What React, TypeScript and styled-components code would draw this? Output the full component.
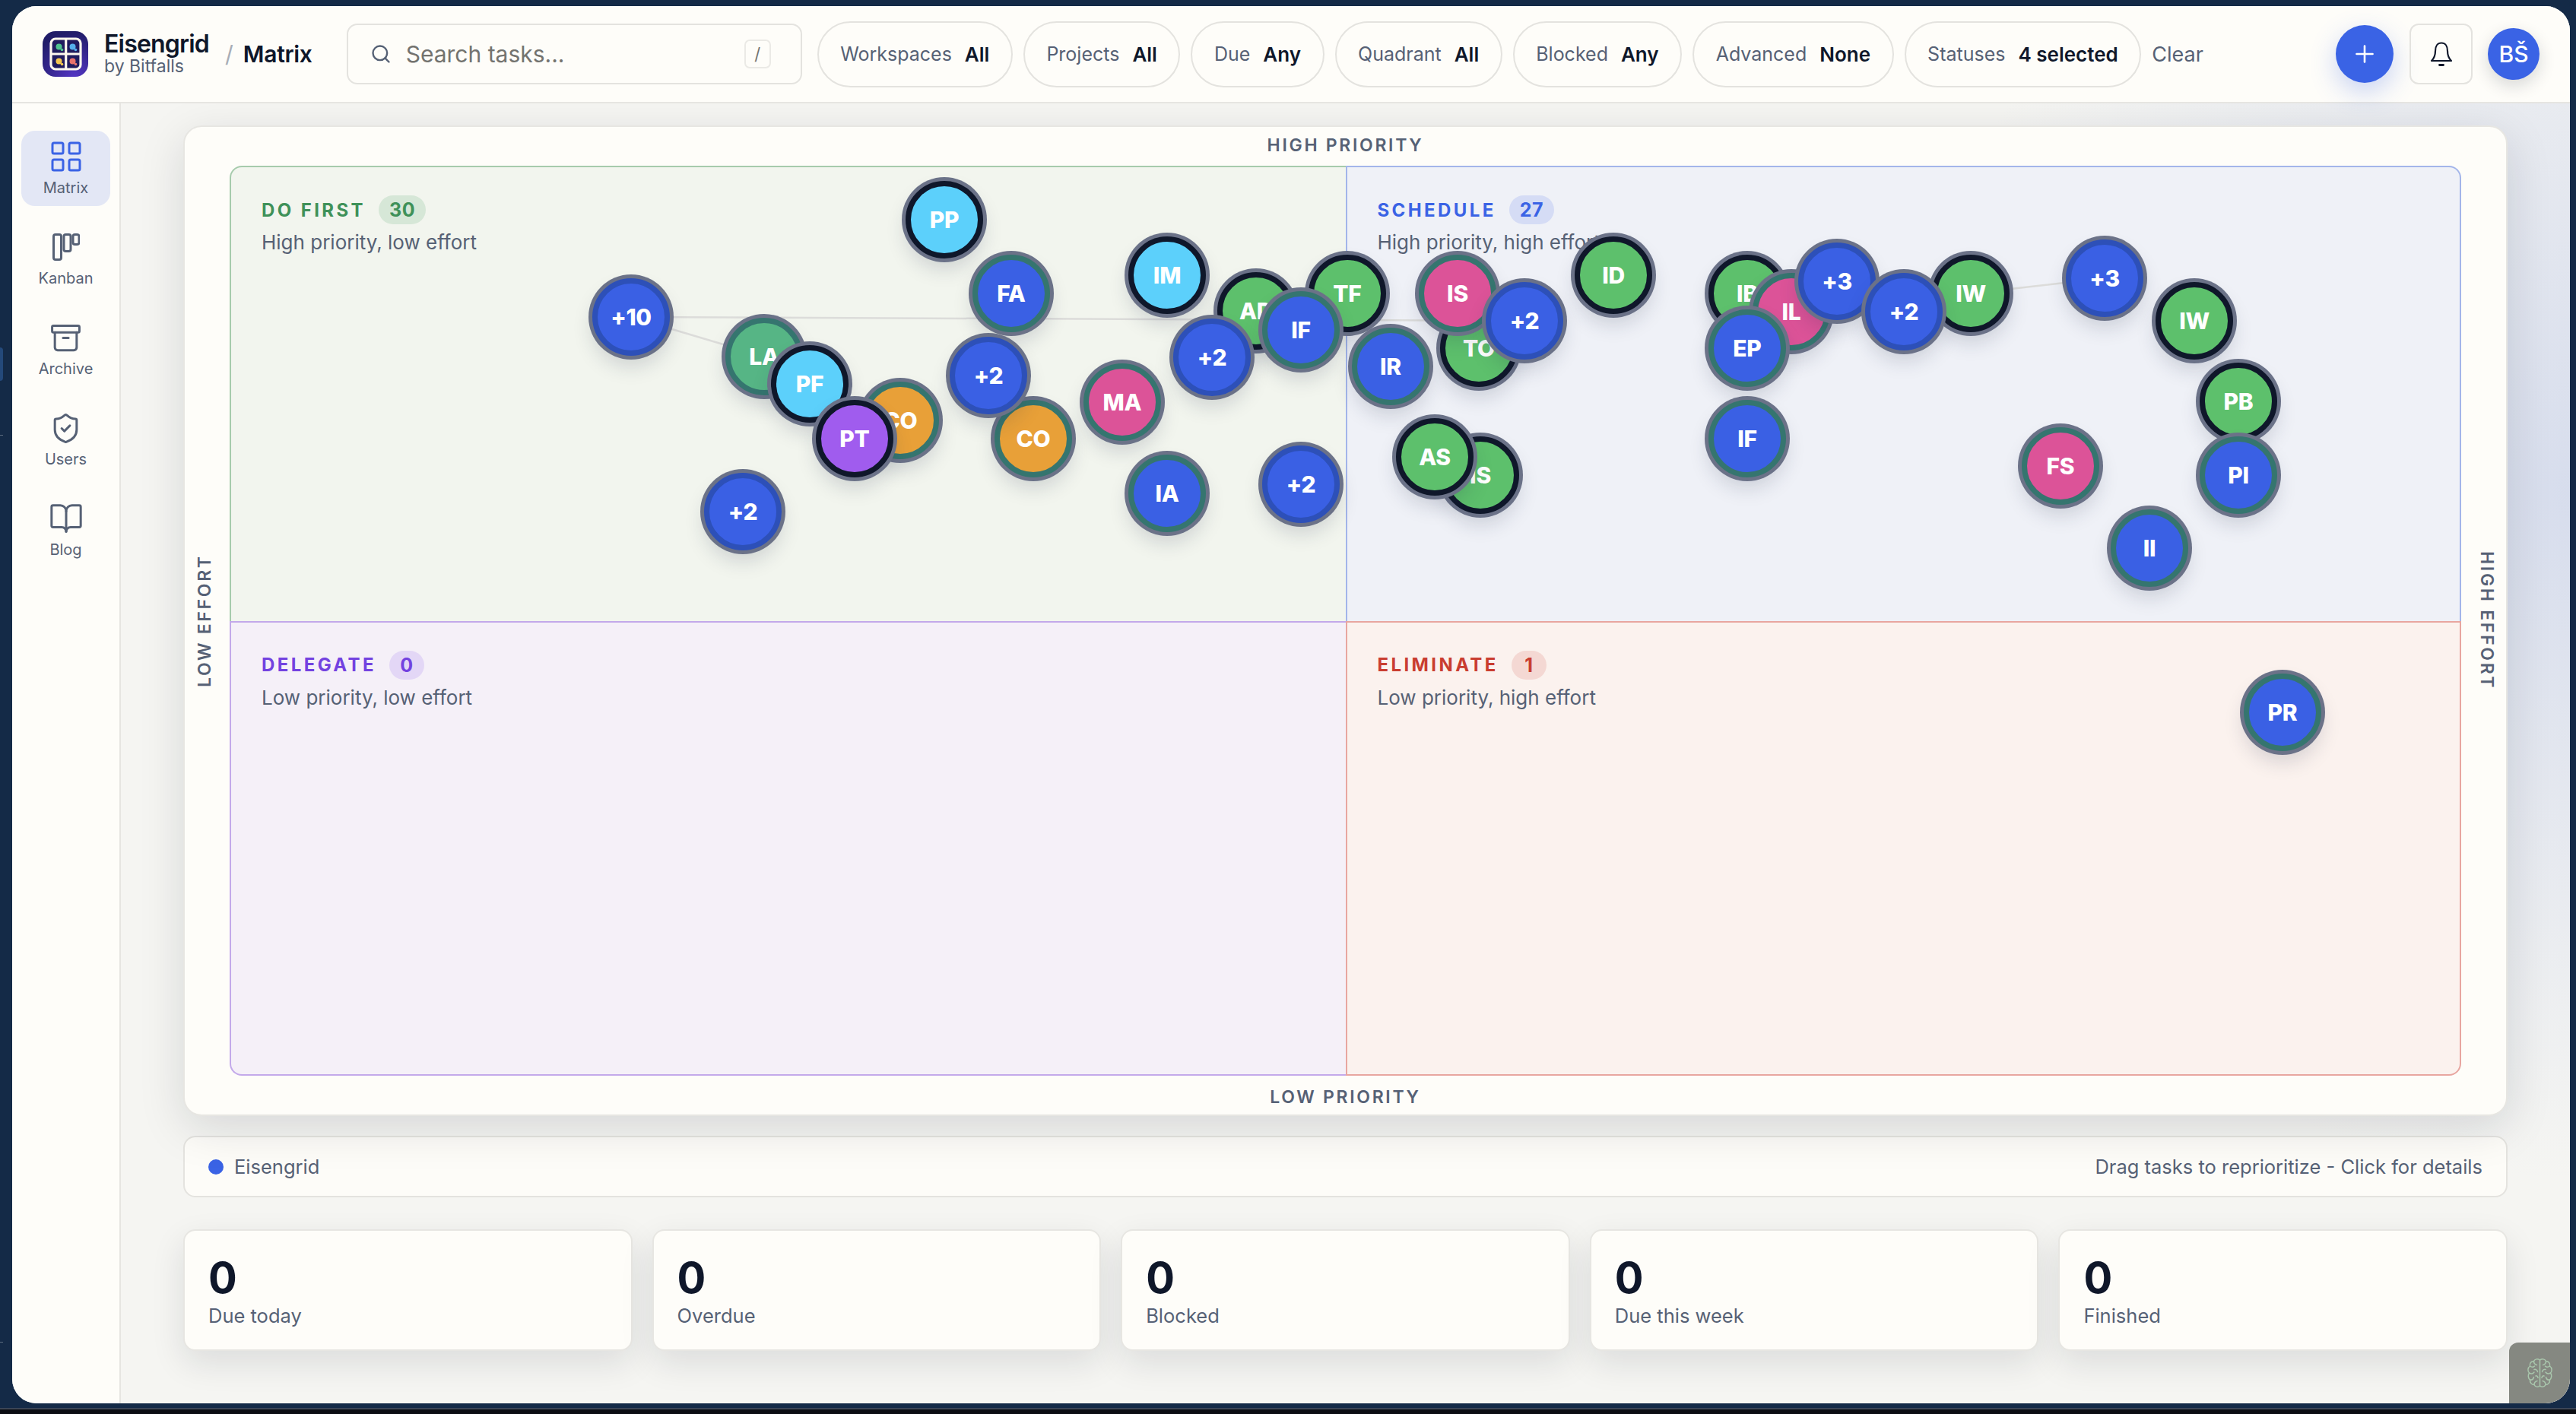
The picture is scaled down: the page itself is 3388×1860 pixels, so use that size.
import styled, { createGlobalStyle } from 'styled-components';
import { Archive, BookOpen, LayoutGrid, Plus, Search, ShieldCheck } from 'lucide-react';

const GlobalStyle = createGlobalStyle`
  html, body {
    margin: 0;
    padding: 0;
    background: #142a47;
  }
  * {
    box-sizing: border-box;
  }
`;

// Desktop behind the app window
const Desktop = styled.div`
  position: relative;
  width: 3388px;
  height: 1860px;
  padding: 8px 8px 14px 16px;
  background: #142a47;
  overflow: hidden;
  font-family: Inter, 'Noto Sans', sans-serif;
`;

const DockEdge = styled.div`
  position: absolute;
  left: 0;
  top: 457px;
  width: 4px;
  height: 44px;
  border-radius: 0 6px 6px 0;
  background: #24497a;
`;

const DockTick = styled.div<{ $top: number }>`
  position: absolute;
  left: 0;
  top: ${(p) => p.$top}px;
  width: 4px;
  height: 1px;
  background: #5d6c80;
`;

const BottomEdge = styled.div`
  position: absolute;
  left: 0;
  right: 0;
  bottom: 0;
  height: 8px;
  border-top: 2px solid #3c4656;
  background: #0b0d12;
`;

const AppWindow = styled.div`
  position: relative;
  height: 100%;
  display: flex;
  flex-direction: column;
  border-radius: 32px;
  background: #fefdf9;
  overflow: hidden;
`;

const Header = styled.header`
  flex: none;
  height: 128px;
  display: flex;
  align-items: center;
  padding: 0 40px;
  background: #fefdf9;
  border-bottom: 2px solid #e6e5e1;
  position: relative;
  z-index: 3;
`;

const Brand = styled.div`
  display: flex;
  flex-direction: column;
  margin-left: 21px;
  line-height: 1;
`;

const BrandName = styled.div`
  font-size: 32px;
  font-weight: 600;
  letter-spacing: -0.8px;
  line-height: 32px;
  color: #0f172a;
`;

const BrandSub = styled.div`
  font-size: 23px;
  line-height: 26px;
  color: #566175;
`;

const Slash = styled.span`
  margin-left: 21px;
  font-size: 30px;
  color: #a8adb6;
`;

const PageName = styled.div`
  margin-left: 13px;
  font-size: 30px;
  font-weight: 600;
  letter-spacing: -0.3px;
  color: #0f172a;
`;

const SearchBox = styled.div`
  width: 599px;
  height: 80px;
  margin: 0 20px 0 45px;
  padding: 0 39px 0 29px;
  display: flex;
  align-items: center;
  border: 2px solid #e4e3df;
  border-radius: 14px;
  color: #566175;
`;

const SearchText = styled.span`
  flex: 1;
  margin-left: 19px;
  font-size: 30px;
  color: #73736f;
`;

const Key = styled.span`
  width: 35px;
  height: 38px;
  display: flex;
  align-items: center;
  justify-content: center;
  border: 2px solid #ebeae6;
  border-radius: 7px;
  font-size: 22px;
  color: #73736f;
`;

const Filters = styled.div`
  display: flex;
  align-items: center;
  gap: 14px;
`;

const FilterPill = styled.div`
  height: 87px;
  padding: 0 28.5px;
  display: flex;
  align-items: center;
  gap: 17px;
  border: 2px solid #e4e3df;
  border-radius: 44px;
  font-size: 25px;
  color: #566175;
  white-space: nowrap;
`;

const FilterValue = styled.b`
  font-size: 26px;
  font-weight: 600;
  color: #0f172a;
`;

const ClearLink = styled.span`
  font-size: 27px;
  color: #566175;
`;

const HeaderActions = styled.div`
  margin-left: auto;
  display: flex;
  align-items: center;
`;

const AddButton = styled.div`
  width: 76px;
  height: 76px;
  display: flex;
  align-items: center;
  justify-content: center;
  border-radius: 50%;
  background: #3a63e5;
  color: #fff;
  box-shadow: 0 12px 34px rgba(58, 99, 229, 0.28);
`;

const BellButton = styled.div`
  width: 83px;
  height: 80px;
  margin: 0 20px 0 21px;
  display: flex;
  align-items: center;
  justify-content: center;
  border: 2px solid #e4e3df;
  border-radius: 12px;
  color: #0f172a;
`;

const Avatar = styled.div`
  width: 68px;
  height: 68px;
  display: flex;
  align-items: center;
  justify-content: center;
  border-radius: 50%;
  background: #3a63e5;
  color: #fff;
  font-size: 30px;
  font-weight: 500;
  box-shadow: 0 8px 22px rgba(15, 23, 42, 0.16);
`;

const Body = styled.div`
  flex: 1;
  min-height: 0;
  display: flex;
`;

const Sidebar = styled.nav`
  flex: none;
  width: 143px;
  padding: 36px 12px 0;
  display: flex;
  flex-direction: column;
  gap: 20px;
  border-right: 2px solid #e6e5e1;
  background: #fefdf9;
`;

const NavItem = styled.div<{ $active?: boolean }>`
  height: 99px;
  padding-top: 16px;
  display: flex;
  flex-direction: column;
  align-items: center;
  gap: 10px;
  border-radius: 18px;
  background: ${(p) => (p.$active ? '#e3e7f5' : 'transparent')};
  color: ${(p) => (p.$active ? '#3a63e5' : '#566175')};
`;

// keeps every icon on the same 36px line, whatever the drawing's own margins
const NavIcon = styled.div`
  width: 36px;
  height: 36px;
  display: flex;
  align-items: center;
  justify-content: center;

  svg {
    flex: none;
  }
`;

const NavLabel = styled.span`
  font-size: 20px;
  line-height: 26px;
  color: #566175;
`;

const Main = styled.main`
  flex: 1;
  min-width: 0;
  display: flex;
  flex-direction: column;
  padding: 29px 82px 69px 82px;
  background:
    radial-gradient(900px 900px at 100% 30%, rgba(205, 213, 235, 0.75), transparent 100%),
    #f5f5f2;
`;

const MatrixCard = styled.section`
  flex: none;
  height: 1303px;
  position: relative;
  z-index: 1;
  display: grid;
  grid-template-columns: 59px 1fr 59px;
  grid-template-rows: 51px 1fr 51px;
  border: 2px solid #e7e6e2;
  border-radius: 24px;
  background: #fefdf9;
  box-shadow: 0 16px 60px rgba(15, 23, 42, 0.13);
`;

const AxisLabel = styled.div<{ $col: number; $row: number; $vertical?: 'up' | 'down' }>`
  grid-column: ${(p) => p.$col};
  grid-row: ${(p) => p.$row};
  display: flex;
  align-items: center;
  justify-content: center;
  font-size: 23px;
  font-weight: 600;
  letter-spacing: 2.7px;
  color: #566175;
  white-space: nowrap;
  ${(p) => p.$row === 1 && 'padding-bottom: 4px;'}
  ${(p) => p.$row === 3 && 'padding-top: 4px;'}
  ${(p) => p.$vertical && 'writing-mode: vertical-rl;'}
  ${(p) => p.$vertical === 'up' && 'transform: translateX(-4px) rotate(180deg);'}
  ${(p) => p.$vertical === 'down' && 'transform: translateX(4px);'}
`;

const QuadGrid = styled.div`
  grid-column: 2;
  grid-row: 2;
  position: relative;
  display: grid;
  grid-template-columns: 1fr 1fr;
  grid-template-rows: 1fr 1fr;
`;

const Quadrant = styled.div<{
  $bg: string;
  $line: string;
  $right?: boolean;
  $bottom?: boolean;
  $radius: string;
}>`
  padding: 37px 40px;
  background: ${(p) => p.$bg};
  border-top: 2px solid ${(p) => p.$line};
  border-left: 2px solid ${(p) => p.$line};
  ${(p) => p.$right && `border-right: 2px solid ${p.$line};`}
  ${(p) => p.$bottom && `border-bottom: 2px solid ${p.$line};`}
  border-radius: ${(p) => p.$radius};
`;

const QuadTitleRow = styled.div`
  display: flex;
  align-items: center;
  gap: 17px;
  height: 38px;
`;

const QuadTitle = styled.span<{ $color: string }>`
  font-size: 24px;
  font-weight: 700;
  letter-spacing: 3.4px;
  color: ${(p) => p.$color};
`;

const CountPill = styled.span<{ $color: string; $bg: string }>`
  min-width: 46px;
  height: 38px;
  padding: 0 14px;
  display: flex;
  align-items: center;
  justify-content: center;
  border-radius: 19px;
  font-size: 25px;
  font-weight: 700;
  letter-spacing: 0.5px;
  color: ${(p) => p.$color};
  background: ${(p) => p.$bg};
`;

const QuadSub = styled.div`
  margin-top: 6px;
  font-size: 26px;
  line-height: 36px;
  color: #566175;
`;

// Free canvas for the task bubbles, placed by their position in the matrix
const BubbleCanvas = styled.div`
  position: absolute;
  inset: 0;
`;

const LinkLines = styled.svg`
  position: absolute;
  left: 0;
  top: 0;
  overflow: visible;
`;

const Bubble = styled.div<{ $x: number; $y: number; $ring: string; $fill: string }>`
  position: absolute;
  left: ${(p) => p.$x - 51}px;
  top: ${(p) => p.$y - 51}px;
  width: 102px;
  height: 102px;
  display: flex;
  align-items: center;
  justify-content: center;
  border: 7px solid ${(p) => p.$ring};
  border-radius: 50%;
  background: ${(p) => p.$fill};
  box-shadow: 0 0 0 5px #6b7288, 0 14px 26px rgba(30, 41, 70, 0.17);
  color: #fff;
  font-size: 30px;
  font-weight: 800;
  letter-spacing: -0.3px;
`;

const StatusBar = styled.div`
  flex: none;
  height: 81px;
  margin-top: 26px;
  padding: 0 31px;
  display: flex;
  align-items: center;
  justify-content: space-between;
  border: 2px solid #e4e3df;
  border-radius: 16px;
  background: #fdfcf8;
  font-size: 25.5px;
  color: #566175;
`;

const Legend = styled.div`
  display: flex;
  align-items: center;
  gap: 14px;
`;

const LegendDot = styled.span`
  width: 20px;
  height: 20px;
  border-radius: 50%;
  background: #3a63e5;
`;

const StatRow = styled.div`
  flex: none;
  margin-top: 42px;
  display: grid;
  grid-template-columns: repeat(5, 1fr);
  gap: 26px;
`;

const StatCard = styled.div`
  height: 160px;
  padding: 30px 31px;
  border: 2px solid #e7e6e2;
  border-radius: 16px;
  background: #fefdf9;
  box-shadow: 0 16px 44px rgba(15, 23, 42, 0.11);
`;

const StatNumber = styled.div`
  font-size: 56px;
  font-weight: 700;
  line-height: 64px;
  color: #0f172a;
`;

const StatLabel = styled.div`
  margin-top: 1px;
  font-size: 25.5px;
  line-height: 34px;
  color: #566175;
`;

const BrainBadge = styled.div`
  position: absolute;
  right: 0;
  bottom: 0;
  z-index: 4;
  width: 80px;
  height: 80px;
  display: flex;
  align-items: center;
  justify-content: center;
  border-radius: 12px 0 0 0;
  background: #858881;
  color: #a9c6ac;
`;

const LogoMark = () => (
  <svg width="60" height="60" viewBox="0 0 60 60">
    <defs>
      <radialGradient id="logoBg" cx="0.7" cy="1" r="1">
        <stop offset="0" stopColor="#5436c4" />
        <stop offset="1" stopColor="#201c68" />
      </radialGradient>
    </defs>
    <rect width="60" height="60" rx="17" fill="url(#logoBg)" />
    <rect x="11" y="10" width="39" height="40" rx="6" fill="#201c5e" stroke="#fdf8ee" strokeWidth="3.2" />
    <path d="M30.7 10v40M11 30h39" stroke="#fdf8ee" strokeWidth="3.2" />
    <circle cx="21.5" cy="20.5" r="4" fill="#4fc38e" />
    <circle cx="25.5" cy="24.5" r="1.8" fill="#4fc38e" />
    <circle cx="39.5" cy="20.5" r="4" fill="#55b0ea" />
    <circle cx="43.5" cy="24.5" r="1.8" fill="#55b0ea" />
    <circle cx="21.5" cy="39.5" r="4" fill="#f4c64f" />
    <circle cx="25.5" cy="43.5" r="1.8" fill="#f4c64f" />
    <circle cx="39.5" cy="39.5" r="4" fill="#e8736c" />
    <circle cx="43.5" cy="43.5" r="1.8" fill="#e8736c" />
  </svg>
);

const KanbanIcon = () => (
  <svg width="36" height="36" viewBox="0 0 36 36" fill="none" stroke="currentColor" strokeWidth="3" strokeLinejoin="round">
    <rect x="1.5" y="1.5" width="10" height="33" rx="2.5" />
    <rect x="15" y="1.5" width="9" height="22" rx="2.5" />
    <rect x="27" y="1.5" width="8" height="13" rx="2.5" />
  </svg>
);

const BellIcon = () => (
  <svg width="30" height="32" viewBox="0 0 30 32" fill="none" stroke="currentColor" strokeLinecap="round" strokeLinejoin="round">
    <path d="M2 25C5 22 7 19 7 12C7 5.500 10 1.500 15 1.500C20 1.500 23 5.500 23 12C23 19 25 22 28 25Z" strokeWidth="2.2" />
    <path d="M12.500 30.500h5" strokeWidth="2.800" />
  </svg>
);

const brainLobe = (
  <>
    <path d="M17.500 3C14.500 1 11 1.500 9.500 4.500C6 4.500 3.500 7.500 4.500 11C1.500 13 1 17.500 3.500 20C1.500 23 2 27 4.500 29C4 33 7 35.500 10 35.500C11.500 38.500 15 39 17.500 37" />
    <path d="M9.500 4.500C9.500 7 11 9 13.500 9.500M4.500 11C6.500 12.500 9 12.500 10.500 11M3.500 20C6 21.500 8.500 21 10 19M10 15.500C12 15 14 16 14.500 18.500M4.500 29C7 29.500 9 28 9.500 25.500M10 35.500C10 33 11.500 31 14 30.500M12 24C13.500 23.500 15 24.500 15 26.500" />
  </>
);

const BrainIcon = () => (
  <svg width="35" height="40" viewBox="0 0 35 40" fill="none" stroke="currentColor" strokeWidth="1.5" strokeLinecap="round" strokeLinejoin="round">
    {brainLobe}
    <g transform="translate(35 0) scale(-1 1)">{brainLobe}</g>
    <path d="M17.500 3V37" />
  </svg>
);

const filters = [
  ['Workspaces', 'All'],
  ['Projects', 'All'],
  ['Due', 'Any'],
  ['Quadrant', 'All'],
  ['Blocked', 'Any'],
  ['Advanced', 'None'],
  ['Statuses', '4 selected'],
];

const navItems = [
  { label: 'Matrix', icon: <LayoutGrid size={48} strokeWidth={3} absoluteStrokeWidth />, active: true },
  { label: 'Kanban', icon: <KanbanIcon /> },
  { label: 'Archive', icon: <Archive size={43} strokeWidth={3} absoluteStrokeWidth /> },
  { label: 'Users', icon: <ShieldCheck size={43} strokeWidth={3} absoluteStrokeWidth /> },
  { label: 'Blog', icon: <BookOpen size={46} strokeWidth={3} absoluteStrokeWidth /> },
];

const quadrants = [
  { title: 'DO FIRST', count: 30, sub: 'High priority, low effort', color: '#3f9159', pill: '#d6e7d7', bg: '#f2f5ee', line: '#a6cbac', radius: '16px 0 0 0' },
  { title: 'SCHEDULE', count: 27, sub: 'High priority, high effort', color: '#3a63e5', pill: '#d5dcf5', bg: '#eff1f7', line: '#a3b5ea', right: true, radius: '0 16px 0 0' },
  { title: 'DELEGATE', count: 0, sub: 'Low priority, low effort', color: '#7342e0', pill: '#e3d7f6', bg: '#f5f0f8', line: '#c3a9ea', bottom: true, radius: '0 0 0 16px' },
  { title: 'ELIMINATE', count: 1, sub: 'Low priority, high effort', color: '#c93d30', pill: '#f4d8d3', bg: '#fbf2ee', line: '#e8a6a0', right: true, bottom: true, radius: '0 0 16px 0' },
];

const rings = { teal: '#35756f', dark: '#0f172a', blue: '#2d50b8' };
const fills = {
  blue: '#3a60e4',
  green: '#5dc06c',
  sky: '#5cd0fb',
  pink: '#dc5398',
  orange: '#e8a038',
  purple: '#a05cee',
  mint: '#56b585',
};

// page coordinates of the bubble centres, in paint order
const bubbles: { t: string; x: number; y: number; r: keyof typeof rings; f: keyof typeof fills }[] = [
  { t: '+10', x: 830, y: 417, r: 'blue', f: 'blue' },
  { t: 'LA', x: 1005, y: 469, r: 'teal', f: 'mint' },
  { t: 'PF', x: 1065, y: 505, r: 'dark', f: 'sky' },
  { t: 'CO', x: 1184, y: 553, r: 'teal', f: 'orange' },
  { t: 'PT', x: 1124, y: 577, r: 'dark', f: 'purple' },
  { t: 'PP', x: 1242, y: 289, r: 'dark', f: 'sky' },
  { t: 'FA', x: 1330, y: 386, r: 'teal', f: 'blue' },
  { t: 'CO', x: 1359, y: 577, r: 'teal', f: 'orange' },
  { t: '+2', x: 1300, y: 494, r: 'blue', f: 'blue' },
  { t: 'MA', x: 1476, y: 529, r: 'teal', f: 'pink' },
  { t: 'IM', x: 1535, y: 362, r: 'dark', f: 'sky' },
  { t: 'AD', x: 1652, y: 409, r: 'dark', f: 'green' },
  { t: '+2', x: 1594, y: 470, r: 'blue', f: 'blue' },
  { t: 'TF', x: 1772, y: 386, r: 'dark', f: 'green' },
  { t: 'IF', x: 1711, y: 434, r: 'teal', f: 'blue' },
  { t: 'IA', x: 1535, y: 649, r: 'teal', f: 'blue' },
  { t: '+2', x: 1711, y: 637, r: 'blue', f: 'blue' },
  { t: '+2', x: 977, y: 673, r: 'blue', f: 'blue' },
  { t: 'TO', x: 1945, y: 458, r: 'dark', f: 'green' },
  { t: 'IS', x: 1917, y: 386, r: 'teal', f: 'pink' },
  { t: '+2', x: 2005, y: 422, r: 'blue', f: 'blue' },
  { t: 'ID', x: 2122, y: 362, r: 'dark', f: 'green' },
  { t: 'IR', x: 1829, y: 482, r: 'teal', f: 'blue' },
  { t: 'IS', x: 1947, y: 625, r: 'dark', f: 'green' },
  { t: 'AS', x: 1887, y: 601, r: 'dark', f: 'green' },
  { t: 'IB', x: 2298, y: 386, r: 'dark', f: 'green' },
  { t: 'IL', x: 2356, y: 410, r: 'teal', f: 'pink' },
  { t: 'EP', x: 2298, y: 458, r: 'teal', f: 'blue' },
  { t: '+3', x: 2416, y: 370, r: 'blue', f: 'blue' },
  { t: 'IW', x: 2592, y: 386, r: 'dark', f: 'green' },
  { t: '+2', x: 2504, y: 410, r: 'blue', f: 'blue' },
  { t: 'IF', x: 2298, y: 577, r: 'teal', f: 'blue' },
  { t: 'FS', x: 2710, y: 613, r: 'teal', f: 'pink' },
  { t: '+3', x: 2768, y: 366, r: 'blue', f: 'blue' },
  { t: 'IW', x: 2886, y: 422, r: 'dark', f: 'green' },
  { t: 'PB', x: 2944, y: 528, r: 'dark', f: 'green' },
  { t: 'PI', x: 2944, y: 625, r: 'teal', f: 'blue' },
  { t: 'II', x: 2827, y: 721, r: 'teal', f: 'blue' },
  { t: 'PR', x: 3002, y: 937, r: 'teal', f: 'blue' },
];

const links = [
  [830, 417, 2005, 422],
  [830, 417, 1005, 469],
  [2592, 386, 2768, 366],
];

// the quadrant grid's own top left corner in the page
const ORIGIN_X = 302;
const ORIGIN_Y = 218;

const stats = ['Due today', 'Overdue', 'Blocked', 'Due this week', 'Finished'];

const App = () => {
  return (
    <Desktop>
      <GlobalStyle />
      <DockEdge />
      <DockTick $top={572} />
      <DockTick $top={1765} />
      <BottomEdge />
      <AppWindow>
        <Header>
          <LogoMark />
          <Brand>
            <BrandName>Eisengrid</BrandName>
            <BrandSub>by Bitfalls</BrandSub>
          </Brand>
          <Slash>/</Slash>
          <PageName>Matrix</PageName>
          <SearchBox>
            <Search size={28} strokeWidth={2.4} absoluteStrokeWidth />
            <SearchText>Search tasks...</SearchText>
            <Key>/</Key>
          </SearchBox>
          <Filters>
            {filters.map(([label, value]) => (
              <FilterPill key={label}>
                {label}
                <FilterValue>{value}</FilterValue>
              </FilterPill>
            ))}
            <ClearLink>Clear</ClearLink>
          </Filters>
          <HeaderActions>
            <AddButton>
              <Plus size={36} strokeWidth={2.6} absoluteStrokeWidth />
            </AddButton>
            <BellButton>
              <BellIcon />
            </BellButton>
            <Avatar>BŠ</Avatar>
          </HeaderActions>
        </Header>
        <Body>
          <Sidebar>
            {navItems.map((item) => (
              <NavItem key={item.label} $active={item.active}>
                <NavIcon>{item.icon}</NavIcon>
                <NavLabel>{item.label}</NavLabel>
              </NavItem>
            ))}
          </Sidebar>
          <Main>
            <MatrixCard>
              <AxisLabel $col={2} $row={1}>HIGH PRIORITY</AxisLabel>
              <AxisLabel $col={1} $row={2} $vertical="up">LOW EFFORT</AxisLabel>
              <QuadGrid>
                {quadrants.map((q) => (
                  <Quadrant key={q.title} $bg={q.bg} $line={q.line} $right={q.right} $bottom={q.bottom} $radius={q.radius}>
                    <QuadTitleRow>
                      <QuadTitle $color={q.color}>{q.title}</QuadTitle>
                      <CountPill $color={q.color} $bg={q.pill}>{q.count}</CountPill>
                    </QuadTitleRow>
                    <QuadSub>{q.sub}</QuadSub>
                  </Quadrant>
                ))}
                <BubbleCanvas>
                  <LinkLines width="10" height="10">
                    {links.map(([x1, y1, x2, y2]) => (
                      <line
                        key={`${x1}-${y2}`}
                        x1={x1 - ORIGIN_X}
                        y1={y1 - ORIGIN_Y}
                        x2={x2 - ORIGIN_X}
                        y2={y2 - ORIGIN_Y}
                        stroke="#dcdcda"
                        strokeWidth="2.5"
                      />
                    ))}
                  </LinkLines>
                  {bubbles.map((b) => (
                    <Bubble
                      key={`${b.t}-${b.x}`}
                      $x={b.x - ORIGIN_X}
                      $y={b.y - ORIGIN_Y}
                      $ring={rings[b.r]}
                      $fill={fills[b.f]}
                    >
                      {b.t}
                    </Bubble>
                  ))}
                </BubbleCanvas>
              </QuadGrid>
              <AxisLabel $col={3} $row={2} $vertical="down">HIGH EFFORT</AxisLabel>
              <AxisLabel $col={2} $row={3}>LOW PRIORITY</AxisLabel>
            </MatrixCard>
            <StatusBar>
              <Legend>
                <LegendDot />
                Eisengrid
              </Legend>
              <span>Drag tasks to reprioritize - Click for details</span>
            </StatusBar>
            <StatRow>
              {stats.map((label) => (
                <StatCard key={label}>
                  <StatNumber>0</StatNumber>
                  <StatLabel>{label}</StatLabel>
                </StatCard>
              ))}
            </StatRow>
          </Main>
        </Body>
        <BrainBadge>
          <BrainIcon />
        </BrainBadge>
      </AppWindow>
    </Desktop>
  );
};

export default App;
